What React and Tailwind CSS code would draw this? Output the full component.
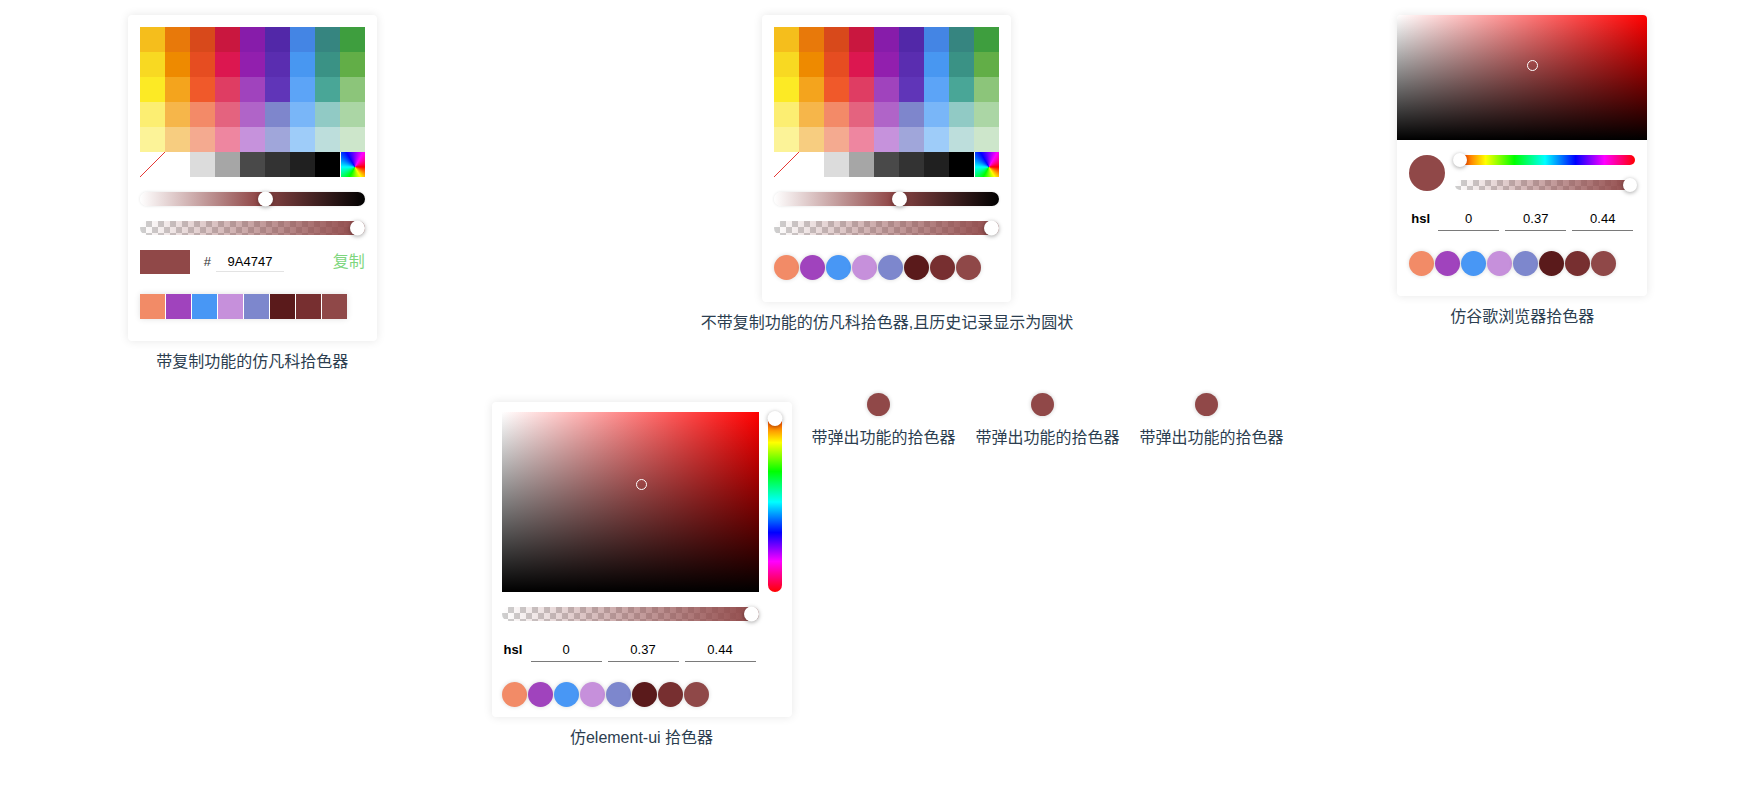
const CUR = '#904848'

const GRID = [
  ['#F5BE1C', '#E8790A', '#D8491B', '#C9173F', '#871CAA', '#5228A8', '#4485E4', '#368580', '#3E9E3E'],
  ['#F8D922', '#EE8A00', '#E64D21', '#DC1750', '#921FAE', '#5A2DB0', '#4897F1', '#3A9285', '#62AE47'],
  ['#FCEA25', '#F4A41D', '#F0592A', '#DF3D63', '#A043BD', '#6035B8', '#5CA4F7', '#49A697', '#8CC57A'],
  ['#FCEE72', '#F6B64A', '#F38A68', '#E4637F', '#B064C8', '#7E86CC', '#79B6F8', '#91CAC5', '#ABD6A5'],
  ['#FCF398', '#F7CD80', '#F4AA90', '#EE86A0', '#C692DC', '#A0A6DA', '#9ECCF9', '#BDDEDC', '#CDE6CB'],
]
const GRAYS = ['#ffffff', '#DCDCDC', '#A6A6A6', '#494949', '#333333', '#202020', '#000000']

const HISTORY = ['#F28B67', '#A043BD', '#4897F5', '#C690DB', '#7D87CD', '#5A1A1B', '#772F30', '#8F4848']

function Thumb({ className = '' }) {
  return (
    <div
      className={`absolute rounded-full bg-white shadow-[0_1px_4px_rgba(0,0,0,0.35)] ${className}`}
    />
  )
}

function AlphaBar({ className = '', children }) {
  return (
    <div className={`relative rounded-full ${className}`}>
      <div className="absolute inset-0 overflow-hidden rounded-full [background-image:repeating-conic-gradient(#cfcfcf_0%_25%,#fff_0%_50%)] [background-size:12px_12px]">
        <div className="h-full w-full [background-image:linear-gradient(to_right,rgba(144,72,72,0),#904848)]" />
      </div>
      {children}
    </div>
  )
}

function Swatches({ round }) {
  if (round) {
    return (
      <div className="flex gap-[1px]">
        {HISTORY.map((c, i) => (
          <div
            key={i}
            className="h-[25px] w-[25px] rounded-full shadow-[0_0_4px_rgba(0,0,0,0.15)]"
            style={{ backgroundColor: c }}
          />
        ))}
      </div>
    )
  }
  return (
    <div className="flex w-fit gap-[1px] bg-white shadow-[0_0_6px_rgba(0,0,0,0.12)]">
      {HISTORY.map((c, i) => (
        <div key={i} className="h-[25px] w-[25px]" style={{ backgroundColor: c }} />
      ))}
    </div>
  )
}

function ColorGrid() {
  return (
    <div className="grid w-[225px] grid-cols-9">
      {GRID.flat().map((c, i) => (
        <div key={i} className="h-[25px]" style={{ backgroundColor: c }} />
      ))}
      <div className="h-[25px] bg-white">
        <svg width="25" height="25" viewBox="0 0 25 25">
          <line x1="0" y1="25" x2="25" y2="0" stroke="#e53935" strokeWidth="1" />
        </svg>
      </div>
      {GRAYS.map((c, i) => (
        <div key={i} className="h-[25px]" style={{ backgroundColor: c }} />
      ))}
      <div className="h-[25px] border-l border-white [background-image:conic-gradient(from_30deg_at_58%_60%,#f0f,#f00,#ff0,#0f0,#0ff,#00f,#f0f)]" />
    </div>
  )
}

function FankePicker({ copy }) {
  return (
    <div className="w-[249px] rounded-[4px] bg-white px-3 pt-3 pb-[22px] shadow-[0_0_10px_rgba(0,0,0,0.1)]">
      <ColorGrid />
      <div className="relative mt-[15px] h-[14px] rounded-full shadow-[0_0_3px_rgba(0,0,0,0.12)] [background-image:linear-gradient(to_right,#fff,#904848_52%,#000)]">
        <Thumb className="left-[118px] top-1/2 h-[15px] w-[15px] -translate-y-1/2" />
      </div>
      <AlphaBar className="mt-[15px] h-[14px]">
        <Thumb className="right-0 top-1/2 h-[15px] w-[15px] -translate-y-1/2" />
      </AlphaBar>
      {copy ? (
        <>
          <div className="mt-[15px] flex h-[24px] items-center">
            <div className="h-[24px] w-[50px]" style={{ backgroundColor: CUR }} />
            <span className="ml-[14px] text-[13px] text-[#333]">#</span>
            <div className="ml-[5px] flex h-[20px] w-[68px] items-center justify-center border-b border-[#e3e3e3] text-[13px] text-black">
              9A4747
            </div>
            <span className="ml-auto text-[16px] leading-6 text-[#7ed67e]">复制</span>
          </div>
          <div className="mt-[20px]">
            <Swatches />
          </div>
        </>
      ) : (
        <div className="mt-[20px]">
          <Swatches round />
        </div>
      )}
    </div>
  )
}

function HslRow({ w }) {
  return (
    <div className="flex items-center">
      <span className="w-[29px] pl-[2px] text-[13px] font-bold text-black">hsl</span>
      <div className="flex gap-[6px]">
        {['0', '0.37', '0.44'].map((v) => (
          <div
            key={v}
            className={`flex h-[24px] items-center justify-center border-b border-[#7a7a7a] text-[13px] text-black ${w}`}
          >
            {v}
          </div>
        ))}
      </div>
    </div>
  )
}

function ChromePicker() {
  return (
    <div className="w-[250px] overflow-hidden rounded-[4px] bg-white shadow-[0_0_10px_rgba(0,0,0,0.1)]">
      <div className="relative h-[125px] [background-image:linear-gradient(to_top,#000,transparent),linear-gradient(to_right,#fff,#f00)]">
        <div className="absolute left-[130px] top-[45px] h-[11px] w-[11px] rounded-full border border-white" />
      </div>
      <div className="px-3 pt-[15px] pb-[20px]">
        <div className="flex">
          <div className="h-[36px] w-[36px] rounded-full" style={{ backgroundColor: CUR }} />
          <div className="ml-[10px] flex-1">
            <div className="relative h-[10px] rounded-full [background-image:linear-gradient(to_right,#f00,#ff0_17%,#0f0_33%,#0ff_50%,#00f_67%,#f0f_83%,#f00)]">
              <Thumb className="left-[-2px] top-1/2 h-[14px] w-[14px] -translate-y-1/2" />
            </div>
            <AlphaBar className="mt-[15px] h-[10px]">
              <Thumb className="right-[-2px] top-1/2 h-[14px] w-[14px] -translate-y-1/2" />
            </AlphaBar>
          </div>
        </div>
        <div className="mt-[16px]">
          <HslRow w="w-[61px]" />
        </div>
        <div className="mt-[20px]">
          <Swatches round />
        </div>
      </div>
    </div>
  )
}

function ElementPicker() {
  return (
    <div className="w-[300px] rounded-[4px] bg-white p-[10px] shadow-[0_0_10px_rgba(0,0,0,0.1)]">
      <div className="flex">
        <div className="relative h-[180px] w-[257px] [background-image:linear-gradient(to_top,#000,transparent),linear-gradient(to_right,#fff,#f00)]">
          <div className="absolute left-[134px] top-[67px] h-[11px] w-[11px] rounded-full border border-white" />
        </div>
        <div className="relative ml-[9px] h-[180px] w-[14px] rounded-full [background-image:linear-gradient(to_bottom,#f00,#ff0_17%,#0f0_33%,#0ff_50%,#00f_67%,#f0f_83%,#f00)]">
          <Thumb className="left-1/2 top-[-1px] h-[15px] w-[15px] -translate-x-1/2" />
        </div>
      </div>
      <AlphaBar className="mt-[15px] h-[14px] w-[257px]">
        <Thumb className="right-0 top-1/2 h-[15px] w-[15px] -translate-y-1/2" />
      </AlphaBar>
      <div className="mt-[17px]">
        <HslRow w="w-[71px]" />
      </div>
      <div className="mt-[20px]">
        <Swatches round />
      </div>
    </div>
  )
}

function Item({ caption, className = '', children }) {
  return (
    <div className={`flex flex-col items-center ${className}`}>
      {children}
      <p className="mt-[9px] whitespace-nowrap text-center text-[16px] leading-6">{caption}</p>
    </div>
  )
}

function PopupItem() {
  return (
    <div className="flex w-[144px] flex-col items-center">
      <div
        className="mr-[11px] h-[23px] w-[23px] rounded-full shadow-[0_0_4px_rgba(0,0,0,0.2)]"
        style={{ backgroundColor: CUR }}
      />
      <p className="mt-[10px] whitespace-nowrap text-center text-[16px] leading-6">带弹出功能的拾色器</p>
    </div>
  )
}

export default function App() {
  return (
    <div className="min-h-screen bg-white pl-[18px] font-['Liberation_Sans','Noto_Sans_CJK_SC',sans-serif] text-[#2c3e50]">
      <div className="flex items-start justify-center gap-[324px] pt-[15px]">
        <Item caption="带复制功能的仿凡科拾色器">
          <FankePicker copy />
        </Item>
        <Item caption="不带复制功能的仿凡科拾色器,且历史记录显示为圆状">
          <FankePicker />
        </Item>
        <Item caption="仿谷歌浏览器拾色器">
          <ChromePicker />
        </Item>
      </div>
      <div className="mt-[19px] flex items-start justify-center gap-[20px]">
        <Item caption="仿element-ui 拾色器" className="mt-[9px]">
          <ElementPicker />
        </Item>
        <PopupItem />
        <PopupItem />
        <PopupItem />
      </div>
    </div>
  )
}
